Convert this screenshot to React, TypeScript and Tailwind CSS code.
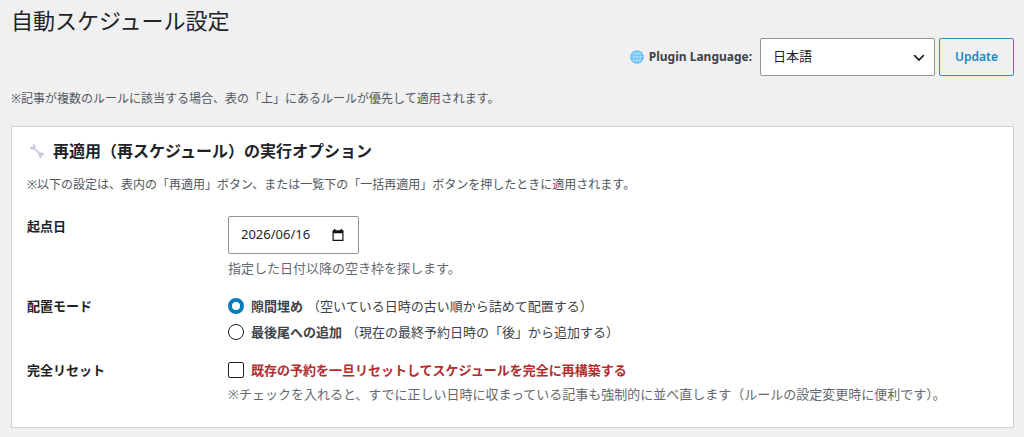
import type { ReactNode } from "react";

const GlobeIcon = () => (
  <svg className="size-3.5 shrink-0" viewBox="0 0 36 36" aria-hidden="true">
    <circle cx="18" cy="18" r="17" fill="#5dbdf5" />
    <g fill="none" stroke="#d3edfd" strokeWidth="1.8">
      <path d="M18 1v34M1 18h34M4.500 9.500h27M4.500 26.500h27" />
      <ellipse cx="18" cy="18" rx="8.500" ry="17" />
      <circle cx="18" cy="18" r="16.200" stroke="#5dbdf5" />
    </g>
  </svg>
);

const WrenchIcon = () => (
  <svg className="size-4 shrink-0" viewBox="0 0 16 16" aria-hidden="true">
    <path
      d="M4.500 4.500 12 12"
      fill="none"
      stroke="#d2cde3"
      strokeWidth="2"
    />
    <path
      d="M1.200 3.200 3.200 4.200 4.300 3.100 3.300 1.200A2.800 2.800 0 1 1 1.200 3.200Z"
      fill="#cbc5de"
    />
    <path
      d="M15 12.700 13.200 12 12.200 13 12.900 14.900A2.700 2.700 0 1 1 15 12.700Z"
      fill="#cbc5de"
    />
  </svg>
);

const CalendarIcon = () => (
  <svg className="size-3.5" viewBox="0 0 14 14" aria-hidden="true">
    <path
      d="M3 1h1.400v1.200h5.200V1H11v1.200h1.500V13h-11V2.200H3ZM2.700 5.200v6.600h8.600V5.200Z"
      fill="#111"
      fillRule="evenodd"
    />
  </svg>
);

const FormRow = ({
  label,
  htmlFor,
  children,
}: {
  label: string;
  htmlFor?: string;
  children: ReactNode;
}) => (
  <div className="flex">
    <div className="w-[201px] shrink-0 text-[13px] leading-5 font-bold text-[#1d2327]">
      {htmlFor ? <label htmlFor={htmlFor}>{label}</label> : label}
    </div>
    <div className="min-w-0 flex-1">{children}</div>
  </div>
);

const modes = [
  {
    value: "fill",
    title: "隙間埋め",
    desc: "（空いている日時の古い順から詰めて配置する）",
  },
  {
    value: "append",
    title: "最後尾への追加",
    desc: "（現在の最終予約日時の「後」から追加する）",
  },
];

export default function App() {
  return (
    <div className="min-h-screen bg-[#f0f0f1] pt-1 pr-[10px] pb-2 pl-[11px] font-['Noto_Sans','Noto_Sans_CJK_JP',sans-serif] text-[13px] text-[#3c434a]">
      <h1 className="text-[22px] leading-8 text-[#1d2327]">
        自動スケジュール設定
      </h1>

      <form className="mt-[2px] flex items-center justify-end">
        <label
          htmlFor="plugin-language"
          className="mr-2 flex items-center gap-[5px] text-[12px] leading-5 font-bold"
        >
          <GlobeIcon />
          Plugin Language:
        </label>
        <div className="relative mr-1 w-[175px]">
          <select
            id="plugin-language"
            defaultValue="ja"
            className="h-[38px] w-full appearance-none rounded-xs border border-[#949494] bg-white px-3 text-[13px] text-[#1e1e1e]"
          >
            <option value="ja">日本語</option>
            <option value="en">English</option>
          </select>
          <svg
            className="pointer-events-none absolute top-3 right-2 size-4"
            viewBox="0 0 20 20"
            aria-hidden="true"
          >
            <path
              d="m5 6 5 5 5-5 2 1-7 7-7-7Z"
              fill="#1e1e1e"
            />
          </svg>
        </div>
        <button
          type="button"
          className="h-[38px] rounded-xs border border-[#2f93c6] px-[15px] text-[12px] font-semibold text-[#1c86bf]"
        >
          Update
        </button>
      </form>

      <p className="mt-[13px] text-[12px] leading-5 text-[#50575e]">
        ※記事が複数のルールに該当する場合、表の「上」にあるルールが優先して適用されます。
      </p>

      <section className="mt-[17px] border border-[#d0d1d3] bg-white px-[15px] pt-3 pb-[23px]">
        <h2 className="flex items-center gap-2 text-[16px] leading-6 font-bold text-[#1d2327]">
          <span className="pl-[2px]">
            <WrenchIcon />
          </span>
          再適用（再スケジュール）の実行オプション
        </h2>
        <p className="mt-3 text-[12px] leading-5 text-[#50575e]">
          ※以下の設定は、表内の「再適用」ボタン、または一覧下の「一括再適用」ボタンを押したときに適用されます。
        </p>

        <div className="mt-[21px] flex flex-col gap-[18px]">
          <FormRow label="起点日" htmlFor="base-date">
            <div className="flex h-[38px] w-[131px] items-center rounded-xs border border-[#949494] bg-white pr-[13px] pl-3">
              <input
                id="base-date"
                type="text"
                defaultValue="2026/06/16"
                className="w-full min-w-0 text-[13px] text-[#1e1e1e] outline-none"
              />
              <button type="button" aria-label="カレンダーを開く">
                <CalendarIcon />
              </button>
            </div>
            <p className="mt-1 text-[13px] leading-5 text-[#646970]">
              指定した日付以降の空き枠を探します。
            </p>
          </FormRow>

          <FormRow label="配置モード">
            <div className="flex flex-col gap-[6px]">
              {modes.map((mode) => (
                <label key={mode.value} className="flex items-center leading-5">
                  <input
                    type="radio"
                    name="mode"
                    value={mode.value}
                    defaultChecked={mode.value === "fill"}
                    className="mr-[7px] size-4 shrink-0 appearance-none rounded-full border border-[#1e1e1e] bg-white checked:border-4 checked:border-[#007cba]"
                  />
                  <strong className="mr-1 font-bold">{mode.title}</strong>
                  <span>{mode.desc}</span>
                </label>
              ))}
            </div>
          </FormRow>

          <FormRow label="完全リセット">
            <label className="flex items-center leading-5 font-bold text-[#b32d2e]">
              <input
                type="checkbox"
                className="mr-[7px] size-4 shrink-0 appearance-none rounded-xs border border-[#1e1e1e] bg-white checked:bg-[#007cba]"
              />
              既存の予約を一旦リセットしてスケジュールを完全に再構築する
            </label>
            <p className="mt-1 leading-5 text-[#646970]">
              ※チェックを入れると、すでに正しい日時に収まっている記事も強制的に並べ直します（ルールの設定変更時に便利です）。
            </p>
          </FormRow>
        </div>
      </section>
    </div>
  );
}
